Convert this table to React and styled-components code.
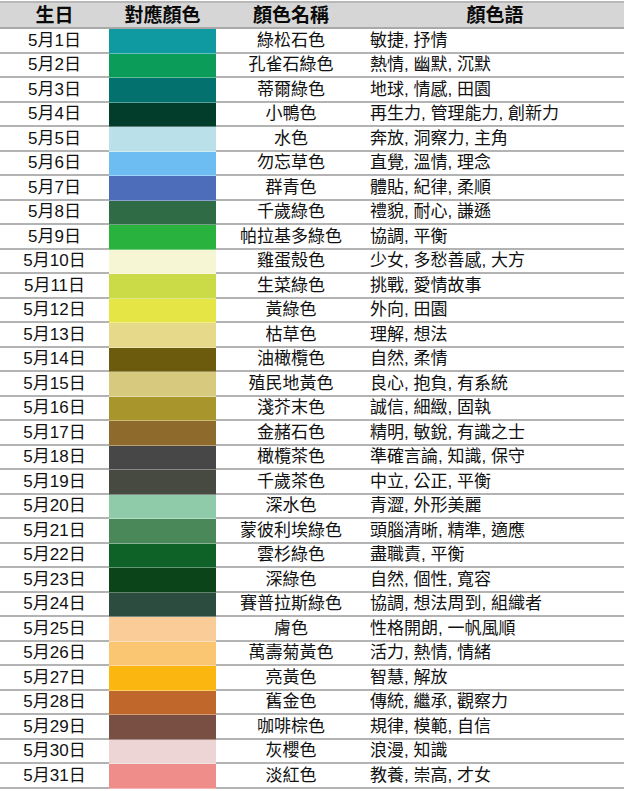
import React from 'react'
import styled, { createGlobalStyle } from 'styled-components'

const GlobalStyle = createGlobalStyle`
    body {
        margin: 0;
        background: #ffffff;
        font-family: "Liberation Sans", "Noto Sans CJK TC", sans-serif;
        color: #111111;
    }
`;

const Table = styled.div`
    width: 624px;
    padding-top: 1px;
`;

const Row = styled.div`
    display: grid;
    grid-template-columns: 109px 107px 150px 258px;
    height: ${props => props.$header ? '26px' : '24.5px'};
    background: ${props => props.$header ? '#d6d6d6' : 'transparent'};
    border-top: ${props => props.$header ? '2px solid #b8b8b8' : 'none'};
`;

const Cell = styled.div`
    display: flex;
    align-items: center;
    justify-content: ${props => props.$left ? 'flex-start' : 'center'};
    padding-left: ${props => props.$left ? '4px' : '0'};
    box-sizing: border-box;
    border-bottom: 2px solid #b3b3b3;
    font-size: 17px;
    line-height: 1;
    white-space: nowrap;
`;

const HeadCell = styled(Cell)`
    justify-content: center;
    padding-left: 0;
    border-bottom-color: #a9a9a9;
    font-size: 19px;
    font-weight: 700;
    color: #0a0a0a;
`;

const Swatch = styled.div`
    box-sizing: border-box;
    border-bottom: 1px solid rgba(255, 255, 255, 0.35);
`;

const rows = [
    ['5月1日', '#0e9aa0', '綠松石色', '敏捷, 抒情'],
    ['5月2日', '#0b9c59', '孔雀石綠色', '熱情, 幽默, 沉默'],
    ['5月3日', '#03716d', '蒂爾綠色', '地球, 情感, 田園'],
    ['5月4日', '#023d2b', '小鴨色', '再生力, 管理能力, 創新力'],
    ['5月5日', '#bae0ea', '水色', '奔放, 洞察力, 主角'],
    ['5月6日', '#6ebdf2', '勿忘草色', '直覺, 溫情, 理念'],
    ['5月7日', '#4d6cb9', '群青色', '體貼, 紀律, 柔順'],
    ['5月8日', '#2f6b45', '千歲綠色', '禮貌, 耐心, 謙遜'],
    ['5月9日', '#29b33e', '帕拉基多綠色', '協調, 平衡'],
    ['5月10日', '#f6f6d4', '雞蛋殼色', '少女, 多愁善感, 大方'],
    ['5月11日', '#cbdb47', '生菜綠色', '挑戰, 愛情故事'],
    ['5月12日', '#e6e546', '黃綠色', '外向, 田園'],
    ['5月13日', '#e6d98a', '枯草色', '理解, 想法'],
    ['5月14日', '#6c5a0d', '油橄欖色', '自然, 柔情'],
    ['5月15日', '#d7c97e', '殖民地黃色', '良心, 抱負, 有系統'],
    ['5月16日', '#a8962d', '淺芥末色', '誠信, 細緻, 固執'],
    ['5月17日', '#8f6a2d', '金赭石色', '精明, 敏銳, 有識之士'],
    ['5月18日', '#474747', '橄欖茶色', '準確言論, 知識, 保守'],
    ['5月19日', '#474a41', '千歲茶色', '中立, 公正, 平衡'],
    ['5月20日', '#8fcba9', '深水色', '青澀, 外形美麗'],
    ['5月21日', '#4a8859', '蒙彼利埃綠色', '頭腦清晰, 精準, 適應'],
    ['5月22日', '#0e6228', '雲杉綠色', '盡職責, 平衡'],
    ['5月23日', '#0a4418', '深綠色', '自然, 個性, 寬容'],
    ['5月24日', '#2b4c3e', '賽普拉斯綠色', '協調, 想法周到, 組織者'],
    ['5月25日', '#facc97', '膚色', '性格開朗, 一帆風順'],
    ['5月26日', '#fbc671', '萬壽菊黃色', '活力, 熱情, 情緒'],
    ['5月27日', '#fbb710', '亮黃色', '智慧, 解放'],
    ['5月28日', '#c0672b', '舊金色', '傳統, 繼承, 觀察力'],
    ['5月29日', '#7a4f43', '咖啡棕色', '規律, 模範, 自信'],
    ['5月30日', '#ecd5d4', '灰櫻色', '浪漫, 知識'],
    ['5月31日', '#ee8d8a', '淡紅色', '教養, 崇高, 才女'],
];

export default function App() {
    return (
        <>
            <GlobalStyle />
            <Table>
                <Row $header>
                    <HeadCell>生日</HeadCell>
                    <HeadCell>對應顏色</HeadCell>
                    <HeadCell>顏色名稱</HeadCell>
                    <HeadCell>顏色語</HeadCell>
                </Row>
                {rows.map(([date, color, name, words]) => (
                    <Row key={date}>
                        <Cell>{date}</Cell>
                        <Swatch style={{ background: color }} />
                        <Cell>{name}</Cell>
                        <Cell $left>{words}</Cell>
                    </Row>
                ))}
            </Table>
        </>
    )
}
